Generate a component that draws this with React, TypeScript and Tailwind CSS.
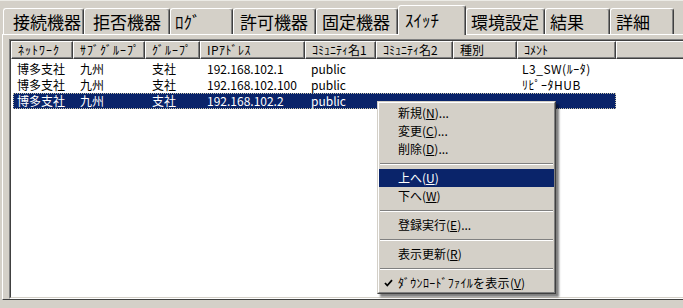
import React from 'react';

type TabDef = { label: string; cls: string; sel?: boolean };

const tabs: TabDef[] = [
  { label: '接続機器', cls: 'w-[81px] pl-[9px]' },
  { label: '拒否機器', cls: 'w-[86px] pl-[8px]' },
  { label: 'ﾛｸﾞ', cls: 'w-[63px] pl-[4px]' },
  { label: '許可機器', cls: 'w-[83px] pl-[6px]' },
  { label: '固定機器', cls: 'w-[82px] pl-[5px]' },
  { label: 'ｽｲｯﾁ', cls: 'w-[68px] pl-[6px]', sel: true },
  { label: '環境設定', cls: 'w-[79px] pl-[4px]' },
  { label: '結果', cls: 'w-[65px] pl-[4px]' },
  { label: '詳細', cls: 'w-[64px] pl-[5px]' },
];

const headers: { label: string; cls: string }[] = [
  { label: 'ﾈｯﾄﾜｰｸ', cls: 'w-[62px] tracking-[1px]' },
  { label: 'ｻﾌﾞｸﾞﾙｰﾌﾟ', cls: 'w-[72px] tracking-[1px]' },
  { label: 'ｸﾞﾙｰﾌﾟ', cls: 'w-[55px] tracking-[1px]' },
  { label: 'IPｱﾄﾞﾚｽ', cls: 'w-[105px] tracking-[0.5px]' },
  { label: 'ｺﾐｭﾆﾃｨ名1', cls: 'w-[71px]' },
  { label: 'ｺﾐｭﾆﾃｨ名2', cls: 'w-[77px]' },
  { label: '種別', cls: 'w-[64px]' },
  { label: 'ｺﾒﾝﾄ', cls: 'w-[99px]' },
];

const rows = [
  ['博多支社', '九州', '支社', '192.168.102.1', 'public', '', '', 'L3_SW(ﾙｰﾀ)'],
  ['博多支社', '九州', '支社', '192.168.102.100', 'public', '', '', 'ﾘﾋﾟｰﾀHUB'],
  ['博多支社', '九州', '支社', '192.168.102.2', 'public', '', '', ''],
];

const rowCellCls = [
  'w-[60px] pl-[4px]',
  'w-[72px] pl-[7px]',
  'w-[55px] pl-[7px]',
  'w-[105px] pl-[7px]',
  'w-[71px] pl-[6px]',
  'w-[77px] pl-[7px]',
  'w-[64px] pl-[7px]',
  'w-[99px] pl-[5px] tracking-[0.5px]',
];

function Tab({ t }: { t: TabDef }) {
  if (t.sel) {
    return (
      <div
        className={`relative z-10 -mb-px h-[30px] shrink-0 ${t.cls} bg-[#d4d0c8] border-t border-l border-r border-t-white border-l-white border-r-[#404040] shadow-[inset_-1px_0_0_#808080] rounded-t-[3px] pt-[2px] text-[17px] leading-[24px] whitespace-nowrap`}
      >
        {t.label}
      </div>
    );
  }
  return (
    <div
      className={`h-[26px] shrink-0 ${t.cls} bg-[#d4d0c8] border-t border-l border-r border-t-white border-l-white border-r-[#404040] shadow-[inset_-1px_0_0_#808080] rounded-t-[3px] pt-[1px] text-[17px] leading-[24px] whitespace-nowrap overflow-hidden`}
    >
      {t.label}
    </div>
  );
}

function Item({ children, hi, check }: { children: React.ReactNode; hi?: boolean; check?: boolean }) {
  return (
    <div
      className={`relative h-[18px] leading-[18px] pl-[19px] whitespace-nowrap ${hi ? 'bg-[#0a246a] text-white' : ''}`}
    >
      {check && (
        <svg className="absolute left-[5px] top-[5px]" width="9" height="8" viewBox="0 0 9 8">
          <path d="M1 4 L3.3 6.5 L8 1.2" fill="none" stroke="#000" strokeWidth="1.8" />
        </svg>
      )}
      {children}
    </div>
  );
}

function Sep() {
  return (
    <div className="h-[11px] flex items-center px-[1px]">
      <div className="w-full h-[2px] border-t border-t-[#808080] border-b border-b-white" />
    </div>
  );
}

function U({ children }: { children: React.ReactNode }) {
  return <span className="underline underline-offset-[1px]">{children}</span>;
}

export default function App() {
  return (
    <div className="relative w-[683px] h-[308px] overflow-hidden bg-[#d4d0c8] text-black font-['Noto_Sans_CJK_JP',sans-serif] border-t border-t-[#ecebe6]">
      {/* tab strip */}
      <div className="flex items-end h-[33px] pl-[3px]">
        {tabs.map((t) => (
          <Tab key={t.label} t={t} />
        ))}
      </div>

      {/* tab page */}
      <div className="ml-[2px] w-[720px] h-[266px] border-t border-l border-b border-t-white border-l-white border-b-[#404040] pt-[4px] pl-[6px]">
        <div className="h-[260px] border border-t-[#808080] border-l-[#808080] border-r-white border-b-white">
          <div className="h-full border border-t-[#404040] border-l-[#404040] border-r-[#d4d0c8] border-b-[#d4d0c8] bg-white">
            {/* header */}
            <div className="flex h-[18px]">
              {headers.map((h) => (
                <div
                  key={h.label}
                  className={`${h.cls} shrink-0 h-full bg-[#d4d0c8] border border-t-white border-l-white border-r-[#404040] border-b-[#404040] shadow-[inset_-1px_-1px_0_#808080] pl-[6px] text-[12px] leading-[15px] whitespace-nowrap overflow-hidden`}
                >
                  {h.label}
                </div>
              ))}
              <div className="flex-1 h-full bg-[#d4d0c8] border border-t-white border-l-white border-r-[#404040] border-b-[#404040] shadow-[inset_-1px_-1px_0_#808080]" />
            </div>
            {/* rows */}
            <div className="pt-[2px] text-[12px]">
              {rows.map((r, i) => (
                <div
                  key={i}
                  className={`ml-[2px] w-[603px] h-[16px] leading-[16px] flex ${
                    i === 2
                      ? 'bg-[#0a246a] text-white outline-1 outline-dotted outline-[#c8c4a8] -outline-offset-1'
                      : ''
                  }`}
                >
                  {r.map((c, j) => (
                    <div key={j} className={`${rowCellCls[j]} shrink-0 whitespace-nowrap overflow-hidden`}>
                      {c}
                    </div>
                  ))}
                </div>
              ))}
            </div>
          </div>
        </div>
      </div>

      {/* context menu */}
      <div className="absolute left-[377px] top-[100px] w-[179px] bg-[#d4d0c8] border border-t-[#d4d0c8] border-l-[#d4d0c8] border-r-[#404040] border-b-[#404040] shadow-[3px_3px_2px_rgba(0,0,0,0.5)]">
        <div className="border border-t-white border-l-white border-r-[#808080] border-b-[#808080] pt-[1px] text-[12px]">
          <Item>
            新規(<U>N</U>)...
          </Item>
          <Item>
            変更(<U>C</U>)...
          </Item>
          <Item>
            削除(<U>D</U>)...
          </Item>
          <Sep />
          <Item hi>
            上へ(<U>U</U>)
          </Item>
          <Item>
            下へ(<U>W</U>)
          </Item>
          <Sep />
          <Item>
            登録実行(<U>E</U>)...
          </Item>
          <Sep />
          <Item>
            表示更新(<U>R</U>)
          </Item>
          <Sep />
          <Item check>
            <span className="tracking-[0.3px]">ﾀﾞｳﾝﾛｰﾄﾞﾌｧｲﾙを表示</span>(<U>V</U>)
          </Item>
        </div>
      </div>
    </div>
  );
}
